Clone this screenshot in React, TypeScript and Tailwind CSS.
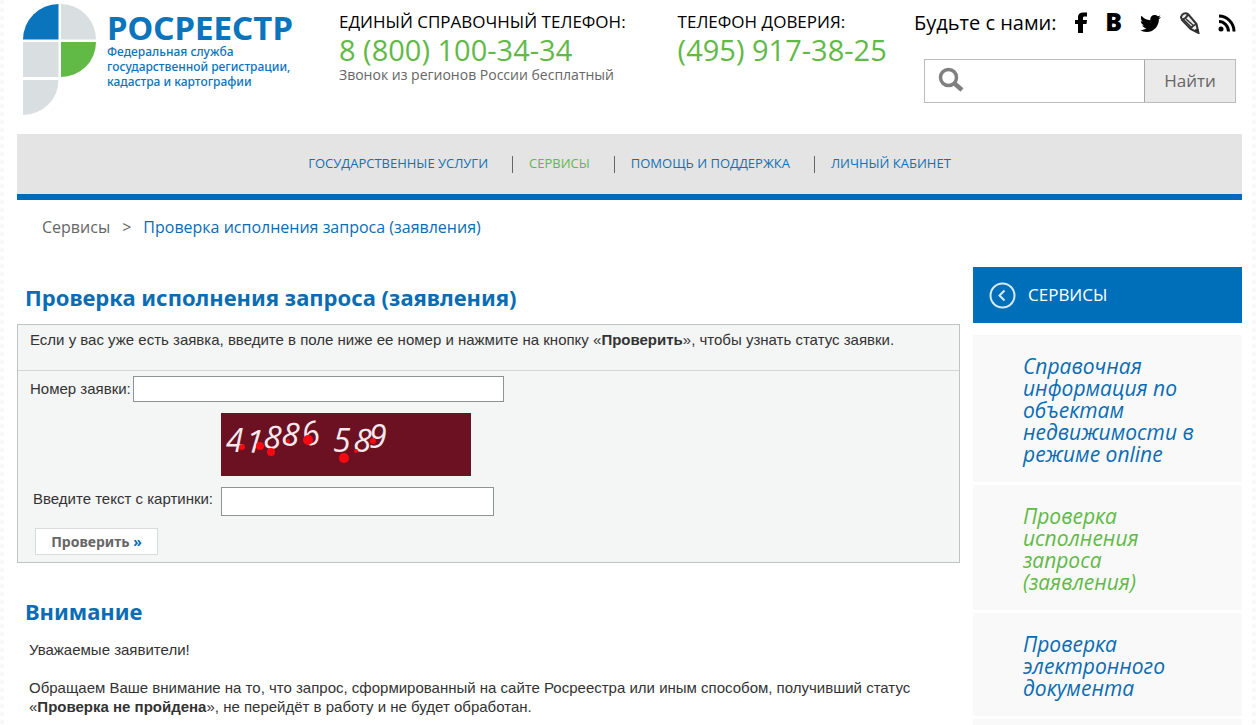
import React from 'react';
import { FaTwitter } from 'react-icons/fa';

const NAV = [
    { label: 'ГОСУДАРСТВЕННЫЕ УСЛУГИ', active: false },
    { label: 'СЕРВИСЫ', active: true },
    { label: 'ПОМОЩЬ И ПОДДЕРЖКА', active: false },
    { label: 'ЛИЧНЫЙ КАБИНЕТ', active: false },
];

const SERVICES = [
    { label: 'Справочная информация по объектам недвижимости в режиме online', active: false },
    { label: 'Проверка исполнения запроса (заявления)', active: true },
    { label: 'Проверка электронного документа', active: false },
];

// cx, cy, r
const CAPTCHA_DOTS = [
    [21, 34, 3], [39, 33, 4], [50, 39, 4], [67, 28, 2], [87, 27, 5], [123, 45, 5], [135, 38, 2], [152, 28, 3],
];

const Logo: React.FC = () => (
    <a href="#" className="flex w-[272px] shrink-0 gap-[11px]">
        <svg width="73" height="111" viewBox="0 0 73 111" className="shrink-0">
            <path d="M0 35.5A35.5 35.5 0 0 1 35.5 0V35.5Z" fill="#0a74bd" />
            <path d="M38 0A35 35.5 0 0 1 73 35.5H38Z" fill="#d9dee1" />
            <path d="M0 38H35.5V73H0Z" fill="#d9dee1" />
            <path d="M38 38H73A35 35 0 0 1 38 73Z" fill="#62ba46" />
            <path d="M0 76H35.5A35.5 35 0 0 1 0 111Z" fill="#d9dee1" />
        </svg>
        <span className="flex flex-col pt-2 font-['Noto_Sans'] text-[#0a74bd]">
            <span className="text-[33px] leading-8 font-bold">РОСРЕЕСТР</span>
            <span className="text-[12px] leading-[15px] font-medium whitespace-nowrap">
                Федеральная служба<br />государственной регистрации,<br />кадастра и картографии
            </span>
        </span>
    </a>
);

const FacebookIcon: React.FC = () => (
    <svg width="12" height="22" viewBox="0 0 12 22">
        <path d="M3 21V12H0V8H3V5C3 2 5 0.500 8 0.500H12V4.500H9.500C8.500 4.500 8 5 8 6V8H12L11.500 12H8V21Z" fill="#000" />
    </svg>
);

const PencilIcon: React.FC = () => (
    <svg width="20" height="22" viewBox="0 0 20 22" fill="none" stroke="#333">
        <path d="M1 5C2 2 5 0 8 2L16.500 12L18.500 21L10.500 17L2 8Z" fill="#eee" strokeWidth="2" />
        <path d="M2 7.500C5 7 7 5 8 2" strokeWidth="2" />
        <path d="M4 8L12 16M6 7L14 14" strokeWidth="1.500" />
        <path d="M10.500 17C12 14 14 13 16.500 12" strokeWidth="1.500" />
        <path d="M14.500 18.500L18.500 21L17.500 16.500Z" fill="#222" />
    </svg>
);

const RssIcon: React.FC = () => (
    <svg width="18" height="18" viewBox="0 0 18 18" fill="none" stroke="#000" strokeWidth="3">
        <circle cx="3" cy="15" r="2.500" fill="#000" stroke="none" />
        <path d="M1 7.500C6 7.500 10.500 12 10.500 17.500" />
        <path d="M1 2C9 2 16 9 16 17.500" />
    </svg>
);

const Header: React.FC = () => (
    <header className="flex h-[134px] px-[6px] pt-1">
        <Logo />
        <div className="ml-11 flex gap-[52px] pt-[6px] font-['Open_Sans'] whitespace-nowrap">
            <div>
                <div className="text-[17px] leading-6 text-black">ЕДИНЫЙ СПРАВОЧНЫЙ ТЕЛЕФОН:</div>
                <div className="text-[29px] leading-8 text-[#62b947]">8 (800) 100-34-34</div>
                <div className="text-[14px] leading-[18px] text-[#666]">Звонок из регионов России бесплатный</div>
            </div>
            <div>
                <div className="text-[17px] leading-6 text-black">ТЕЛЕФОН ДОВЕРИЯ:</div>
                <div className="text-[29px] leading-8 text-[#62b947]">(495) 917-38-25</div>
            </div>
        </div>
        <div className="ml-auto flex w-[322px] flex-col pt-[3px]">
            <div className="flex h-8 items-center justify-between text-black">
                <span className="font-['Open_Sans'] text-[20px] whitespace-nowrap">Будьте с нами:</span>
                <a href="#" aria-label="Facebook"><FacebookIcon /></a>
                <a href="#" aria-label="ВКонтакте" className="pb-1 font-['Open_Sans'] text-[25px] leading-6 font-extrabold">B</a>
                <a href="#" aria-label="Twitter"><FaTwitter size={21} /></a>
                <a href="#" aria-label="LiveJournal"><PencilIcon /></a>
                <a href="#" aria-label="RSS"><RssIcon /></a>
            </div>
            <form className="mt-5 ml-[10px] flex h-11 border border-[#bcbcbc] bg-white">
                <svg width="28" height="28" viewBox="0 0 28 28" className="mt-[6px] ml-3 shrink-0" fill="none" stroke="#808080">
                    <circle cx="11.500" cy="11.500" r="8" strokeWidth="3.500" />
                    <path d="M17.500 17.500L25 24" strokeWidth="4.500" />
                </svg>
                <input aria-label="Поиск" className="min-w-0 flex-1 px-2 outline-none" />
                <button type="button" className="w-[91px] border-l border-[#a8a8a8] bg-[#eaeaea] font-['Open_Sans'] text-[17px] text-[#666]">Найти</button>
            </form>
        </div>
    </header>
);

const Nav: React.FC = () => (
    <nav className="flex h-[66px] items-center justify-center border-b-[6px] border-[#006cb7] bg-[#e4e4e4] font-['Open_Sans'] text-[13px]">
        {NAV.map((item, i) => (
            <React.Fragment key={item.label}>
                {i > 0 && <span className="mr-4 ml-6 h-[17px] w-px bg-[#666]" />}
                <a href="#" className={item.active ? 'text-[#62b947]' : 'text-[#1072b5]'}>{item.label}</a>
            </React.Fragment>
        ))}
    </nav>
);

const Captcha: React.FC = () => (
    <svg width="250" height="63" viewBox="0 0 250 63" className="mt-[11px] ml-[191px]" role="img" aria-label="Картинка с цифрами">
        <rect width="250" height="63" fill="#6c1122" />
        <text
            x="5 24 42 60 84 112 132 148"
            y="39 39 35 32 34 39 38 35"
            rotate="0 4 4 4 -16 0 4 0"
            fill="#f6e8ec"
            fontFamily="Open Sans, sans-serif"
            fontSize="32"
            fontStyle="italic"
            fontWeight="500"
        >
            41886589
        </text>
        {CAPTCHA_DOTS.map(([cx, cy, r], i) => <circle key={i} cx={cx} cy={cy} r={r} fill="#f60a12" />)}
    </svg>
);

const CheckForm: React.FC = () => (
    <form className="border border-[#bfc4c3] bg-[#f4f5f5]">
        <p className="h-[46px] border-b border-[#d3d6d6] px-3 pt-[5px] leading-[19px]">
            Если у вас уже есть заявка, введите в поле ниже ее номер и нажмите на кнопку «<b>Проверить</b>», чтобы узнать статус заявки.
        </p>
        <div className="flex flex-col px-3 pt-[5px] pb-[7px]">
            <div className="flex items-center">
                <label htmlFor="request-number" className="w-[103px]">Номер заявки:</label>
                <input id="request-number" className="h-[26px] w-[371px] border border-[#8e9494] bg-white px-1" />
            </div>
            <Captcha />
            <div className="mt-[11px] flex">
                <label htmlFor="captcha" className="w-[191px] pt-px pl-[3px]">Введите текст с картинки:</label>
                <input id="captcha" className="h-[29px] w-[273px] border border-[#8e9494] bg-white px-1" />
            </div>
            <button type="button" className="mt-3 ml-[5px] h-[27px] w-[123px] border border-[#d9dcdc] bg-white font-['Noto_Sans'] text-[14px] leading-5 font-bold text-[#666]">
                Проверить <span className="text-[#0a6cb0]">»</span>
            </button>
        </div>
    </form>
);

const Sidebar: React.FC = () => (
    <aside className="w-[269px] shrink-0">
        <a href="#" className="mb-3 flex h-14 items-center gap-3 bg-[#006fb9] pl-4 font-['Open_Sans'] text-[17px] text-white">
            <svg width="27" height="27" viewBox="0 0 27 27" fill="none" stroke="#d8ebf8" strokeWidth="2">
                <circle cx="13.500" cy="13.500" r="12" />
                <path d="M15.500 8.500L10.500 13.500L15.500 18.500" />
            </svg>
            СЕРВИСЫ
        </a>
        <ul className="flex flex-col gap-[3px]">
            {SERVICES.map((item) => (
                <li key={item.label} className="bg-[#f9f9f9] pt-5 pr-10 pb-[17px] pl-[50px]">
                    <a href="#" className={`block font-['Open_Sans'] text-[21px] leading-[22px] italic ${item.active ? 'text-[#62b947]' : 'text-[#0a6db3]'}`}>
                        {item.label}
                    </a>
                </li>
            ))}
            <li className="h-16 bg-[#f9f9f9]" />
        </ul>
    </aside>
);

const App: React.FC = () => (
    <div className="h-screen overflow-hidden border-x-4 border-dotted border-[#f6f6f6] bg-white pr-[10px] pl-[13px] font-['Liberation_Sans'] text-[15px] text-[#333]">
        <Header />
        <Nav />
        <div className="flex gap-3 pt-[15px] pl-[25px] font-['Open_Sans'] text-[16px] leading-6">
            <a href="#" className="text-[#666]">Сервисы</a>
            <span className="text-[#666]">&gt;</span>
            <span className="text-[#0a6db3]">Проверка исполнения запроса (заявления)</span>
        </div>
        <div className="flex gap-[13px] pt-7">
            <main className="min-w-0 flex-1">
                <h1 className="h-[57px] pt-[14px] pl-2 font-['Noto_Sans'] text-[22px] leading-8 font-bold text-[#0a6db3]">Проверка исполнения запроса (заявления)</h1>
                <CheckForm />
                <h2 className="mt-8 pl-2 font-['Noto_Sans'] text-[22px] leading-8 font-bold text-[#0a6db3]">Внимание</h2>
                <div className="flex flex-col gap-[19px] pt-[13px] pr-12 pl-3 leading-[19px]">
                    <p>Уважаемые заявители!</p>
                    <p>
                        Обращаем Ваше внимание на то, что запрос, сформированный на сайте Росреестра или иным способом, получивший статус
                        «<b>Проверка не пройдена</b>», не перейдёт в работу и не будет обработан.
                    </p>
                </div>
            </main>
            <Sidebar />
        </div>
    </div>
);

export default App;
